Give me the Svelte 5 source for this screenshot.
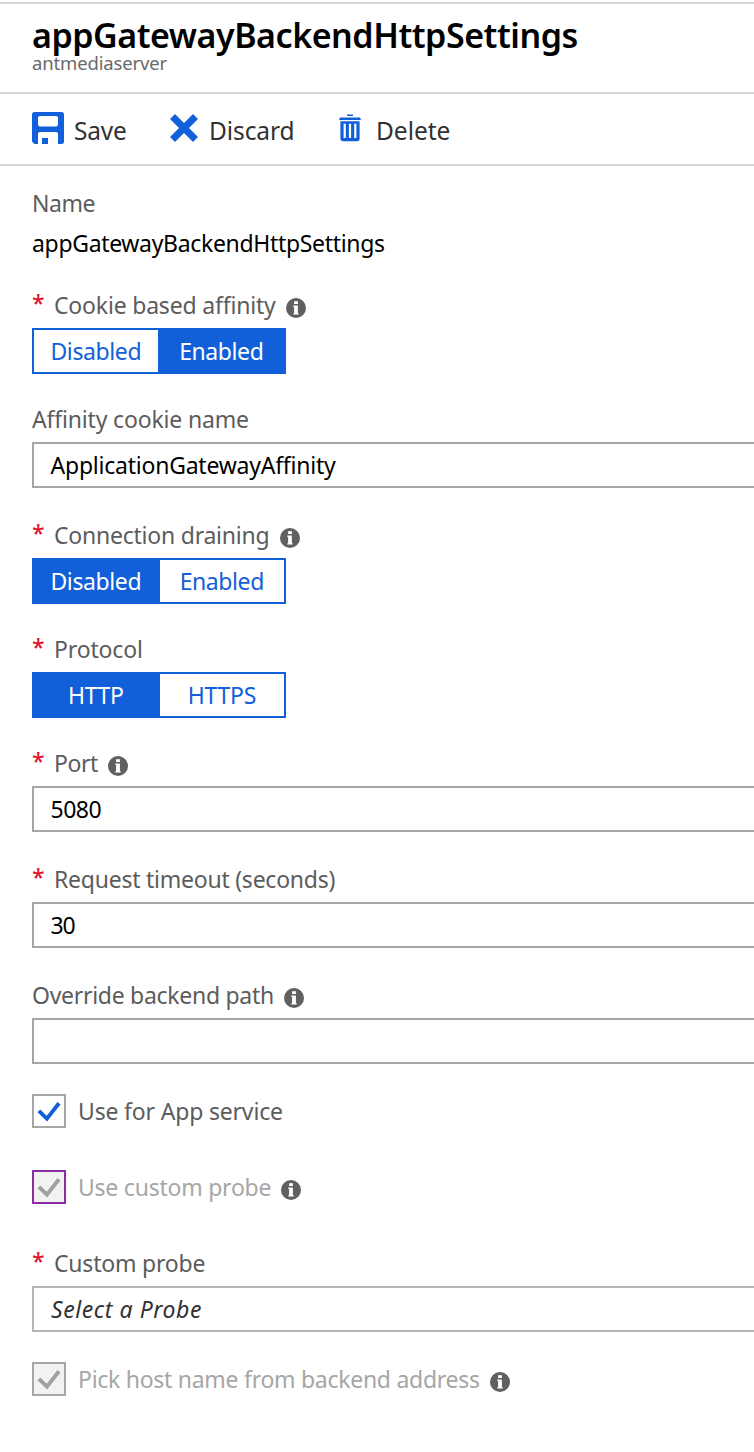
<script>
  // Tracks each label so that its glyphs span the given width in pixels.
  const ctx = document.createElement('canvas').getContext('2d');
  function span(node, width) {
    const s = getComputedStyle(node);
    ctx.font = `${s.fontStyle} ${s.fontWeight} ${s.fontSize} ${s.fontFamily}`;
    const text = node.textContent;
    const m = ctx.measureText(text);
    const ink = m.actualBoundingBoxRight + m.actualBoundingBoxLeft;
    const gap = (width - ink) / (text.length - 1);
    node.style.letterSpacing = `${gap.toFixed(3)}px`;
    node.style.marginRight = `${(-gap).toFixed(3)}px`;
  }
</script>

{#snippet info()}
  <svg class="info" viewBox="0 0 20 20" width="20" height="20">
    <circle cx="10" cy="10" r="10" fill="#606060" />
    <rect x="8.1" y="3.2" width="3.800" height="2.800" fill="#fff" />
    <path d="M7.300 7.500h4.600v7.700H12.700v1.400H7.300V15.200h.8V8.900H7.300z" fill="#fff" />
  </svg>
{/snippet}

{#snippet label(text, width, required, hasInfo)}
  <div class="label">
    {#if required}<span class="star">*</span>{/if}
    <span use:span={width}>{text}</span>
    {#if hasInfo}{@render info()}{/if}
  </div>
{/snippet}

{#snippet toggle(a, aw, b, bw, second)}
  <div class="toggle" class:second>
    <button class:on={!second}><span use:span={aw}>{a}</span></button>
    <button class:on={second}><span use:span={bw}>{b}</span></button>
  </div>
{/snippet}

{#snippet check(text, width, kind, hasInfo)}
  <div class="check {kind}">
    <div class="tick">
      <svg viewBox="0 0 30 30" width="30" height="30"><path d="M4.900 14.900l8 7.700L25 7.200" fill="none" stroke="currentColor" stroke-width="3.900" /></svg>
    </div>
    <span use:span={width}>{text}</span>
    {#if hasInfo}{@render info()}{/if}
  </div>
{/snippet}

<main>
  <header>
    <h1><span use:span={544.5}>appGatewayBackendHttpSettings</span></h1>
    <p><span use:span={135.5}>antmediaserver</span></p>
  </header>
  <nav>
    <button class="save">
      <svg viewBox="0 0 32 32" width="32" height="32">
        <path fill="#1160da" fill-rule="evenodd" d="M2.5 0h27A2.5 2.5 0 0 1 32 2.5v27a2.5 2.5 0 0 1-2.5 2.5H26V22q0-2-2-2H8q-2 0-2 2v10H2.5L0 29.5v-27A2.5 2.5 0 0 1 2.5 0zM8 4Q6 4 6 6v6q0 2.500 2 2.500h16q2 0 2-2.500V6q0-2-2-2zM10 26h6v6h-6z" />
      </svg>
      <span use:span={51}>Save</span>
    </button>
    <button class="discard">
      <svg viewBox="0 0 28 28" width="28" height="28"><path d="M2.500 2.500l23 23M25.500 2.500l-23 23" stroke="#1160da" stroke-width="7" /></svg>
      <span use:span={81.5}>Discard</span>
    </button>
    <button class="delete">
      <svg viewBox="0 0 22 28" width="22" height="28">
        <path fill="#1160da" fill-rule="evenodd" d="M8 .5h6v1.500H8zM1 3.500h20l1 2.500H0zM1.400 7.300h19.200V25q0 2.200-2.500 2.200H3.900Q1.400 27.200 1.400 25zM4.600 9.800V24h2.200V9.800zM9.900 9.800V24h2.200V9.800zM15.200 9.800V24h2.200V9.800z" />
      </svg>
      <span use:span={71.5}>Delete</span>
    </button>
  </nav>

  <section>
    {@render label('Name', 60.5, false, false)}
    <div class="value"><span use:span={351}>appGatewayBackendHttpSettings</span></div>

    {@render label('Cookie based affinity', 221, true, true)}
    {@render toggle('Disabled', 88, 'Enabled', 81.5, true)}

    {@render label('Affinity cookie name', 216, false, false)}
    <div class="input"><span use:span={285.5}>ApplicationGatewayAffinity</span></div>

    {@render label('Connection draining', 213.5, true, true)}
    {@render toggle('Disabled', 88, 'Enabled', 81.5, false)}

    {@render label('Protocol', 85, true, false)}
    {@render toggle('HTTP', 53, 'HTTPS', 66, false)}

    {@render label('Port', 42, true, true)}
    <div class="input"><span use:span={50}>5080</span></div>

    {@render label('Request timeout (seconds)', 278.5, true, false)}
    <div class="input"><span use:span={24}>30</span></div>

    {@render label('Override backend path', 240, false, true)}
    <div class="input last"></div>

    {@render check('Use for App service', 202, 'active', false)}
    {@render check('Use custom probe', 190.5, 'off focus', true)}

    {@render label('Custom probe', 149.5, true, false)}
    <div class="input select"><span use:span={150}>Select a Probe</span></div>

    {@render check('Pick host name from backend address', 399, 'off', true)}
  </section>
</main>

<style>
  :global(body) { margin: 0; background: #fff; overflow: hidden; }
  main {
    box-sizing: border-box;
    height: 1452px;
    padding-top: 2px;
    overflow: hidden;
    font: 23px/32px "Noto Sans", "Open Sans", sans-serif;
    color: #5c5c5c;
    white-space: nowrap;
  }
  header {
    box-sizing: border-box;
    height: 92px;
    border-top: 2px solid #d4d4d4;
    border-bottom: 2px solid #d4d4d4;
    padding: 8px 0 0 32px;
  }
  h1 { margin: 0; font-size: 34px; line-height: 47px; font-weight: 600; color: #000; }
  p { margin: -7px 0 0; font-size: 18.5px; line-height: 22px; color: #6a6a6a; }
  nav {
    display: flex;
    box-sizing: border-box;
    height: 72px;
    padding: 18px 0 0 32px;
    border-bottom: 2px solid #d4d4d4;
  }
  button { font: inherit; border: 0; background: none; padding: 0; margin: 0; }
  nav button { display: flex; align-items: flex-start; color: #323232; font-size: 24.5px; height: 36px; line-height: 38px; text-align: left; }
  nav svg { flex: none; }
  .save { width: 138px; gap: 10px; }
  .discard { width: 169px; gap: 11px; }
  .discard svg, .delete svg { margin-top: 2px; }
  .delete { gap: 15px; }
  section { padding: 21px 0 0 32px; }
  .label { display: flex; height: 32px; margin-bottom: 7px; line-height: 33px; }
  .value { height: 32px; margin: 8px 0 30px; color: #000; line-height: 33px; }
  .star { width: 22px; color: #e3122d; font-size: 23px; font-weight: 500; line-height: 29px; }
  .info { flex: none; margin: 9px 0 0 10px; }
  .toggle {
    box-sizing: border-box;
    display: grid;
    grid-template-columns: 126px 124px;
    width: 254px;
    height: 46px;
    border: 2px solid #1160da;
    margin-bottom: 29px;
  }
  .toggle.second { grid-template-columns: 124px 126px; }
  .toggle button { color: #1160da; line-height: 43px; }
  .toggle:not(.second) .on { padding-right: 2px; }
  .toggle .on { background: #1160da; color: #fff; }
  .toggle.second .on { padding-left: 1px; }
  .input {
    box-sizing: border-box;
    height: 46px;
    border: 2px solid #a6a6a6;
    border-right: 0;
    padding-left: 16.5px;
    line-height: 42px;
    color: #000;
    margin-bottom: 31px;
  }
  .input.last { margin-bottom: 30px; }
  .select { font-style: italic; color: #323232; border-color: #b5b5b5; line-height: 43px; margin-bottom: 30px; padding-left: 17px; }
  .check { display: flex; height: 34px; margin-bottom: 42px; line-height: 35px; }
  .check.focus { margin-bottom: 43px; }
  .tick { box-sizing: border-box; flex: none; width: 34px; height: 34px; border: 2px solid #a6a6a6; margin-right: 12px; color: #1160da; }
  .tick svg { display: block; }
  .off { color: #a6a6a6; }
  .off .tick { color: #a0a0a0; background: #f2f2f2; }
  .focus .tick { border-color: #8a2da5; }
  .check .info { margin-top: 10px; }
</style>
